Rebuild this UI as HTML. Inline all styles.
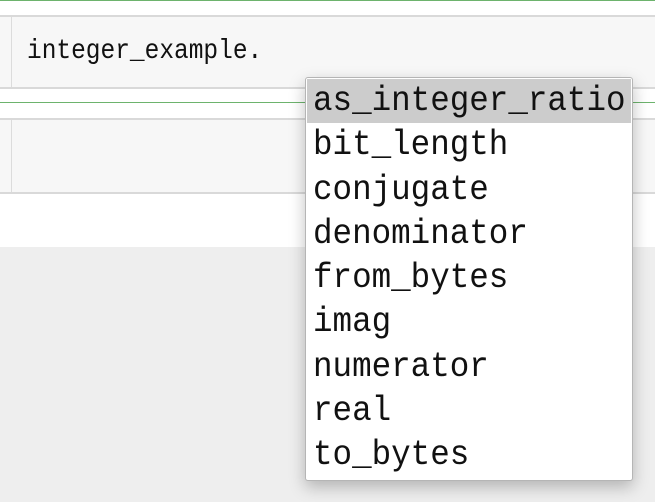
<!DOCTYPE html>
<html><head><style>
body{margin:0;width:655px;height:502px;background:#eeeeee;position:relative;overflow:hidden;font-family:"Liberation Mono",monospace}
.a{position:absolute}
.r{height:44.3px;line-height:44px;padding-left:6px;white-space:nowrap}
.r span{display:inline-block;transform:scaleX(0.93);transform-origin:0 50%}
</style></head><body>
<div class="a" style="left:0;top:0;width:655px;height:247px;background:#fff"></div>
<div class="a" style="left:0;top:0;width:655px;height:1px;background:#6db36d"></div>
<div class="a" style="left:0;top:15px;width:655px;height:74px;background:#f7f7f7;border-top:2px solid #d9d9d9;border-bottom:2px solid #d9d9d9;box-sizing:border-box"></div>
<div class="a" style="left:11px;top:17px;width:1px;height:70px;background:#dcdcdc"></div>
<div class="a" style="left:27px;top:32px;font-size:28px;line-height:40px;color:#111;white-space:nowrap"><span style="display:inline-block;transform:scaleX(0.875);transform-origin:0 50%">integer_example.</span></div>
<div class="a" style="left:0;top:102px;width:655px;height:1px;background:#6db36d"></div>
<div class="a" style="left:0;top:118px;width:655px;height:76px;background:#f7f7f7;border-top:2px solid #d9d9d9;border-bottom:2px solid #d9d9d9;box-sizing:border-box"></div>
<div class="a" style="left:11px;top:120px;width:1px;height:72px;background:#dcdcdc"></div>
<div class="a" style="left:305px;top:77px;width:328px;height:404px;background:#fff;border:1px solid #b5b5b5;border-radius:3px;box-sizing:border-box;box-shadow:0 6px 16px rgba(0,0,0,.25);padding:1px 1px 0 1px;font-size:35px;color:#111">
<div class="r" style="background:#cccccc"><span>as_integer_ratio</span></div>
<div class="r"><span>bit_length</span></div>
<div class="r"><span>conjugate</span></div>
<div class="r"><span>denominator</span></div>
<div class="r"><span>from_bytes</span></div>
<div class="r"><span>imag</span></div>
<div class="r"><span>numerator</span></div>
<div class="r"><span>real</span></div>
<div class="r"><span>to_bytes</span></div>
</div>
</body></html>
